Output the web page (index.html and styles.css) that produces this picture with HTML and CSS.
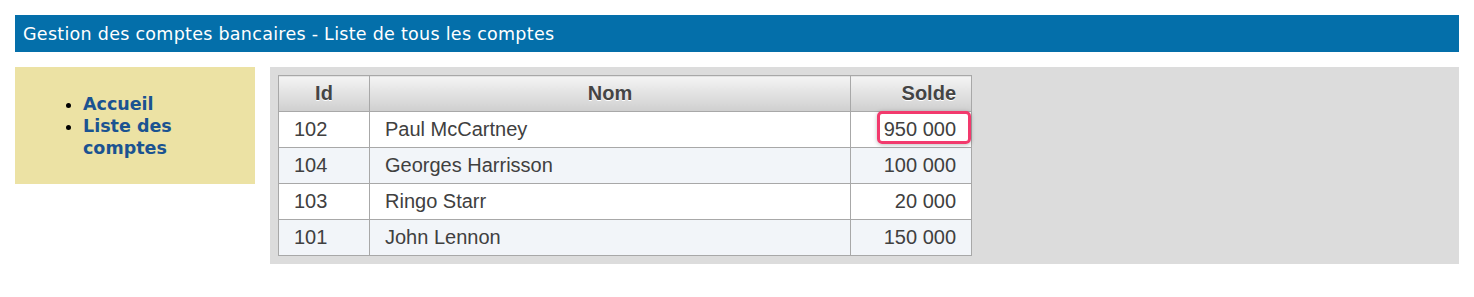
FILE: index.html
```html
<!DOCTYPE html>
<html lang="fr">
<head>
<meta charset="utf-8">
<title>Liste des comptes</title>
<link rel="stylesheet" href="styles.css">
</head>
<body>
<header class="topbar">Gestion des comptes bancaires - Liste de tous les comptes</header>
<div class="main">
  <nav class="sidebar">
    <ul class="menu">
      <li><a href="#">Accueil</a></li>
      <li><a href="#">Liste des comptes</a></li>
    </ul>
  </nav>
  <section class="content">
    <table class="grid">
      <colgroup>
        <col class="c-id"><col class="c-nom"><col class="c-solde">
      </colgroup>
      <thead>
        <tr><th class="center">Id</th><th class="center">Nom</th><th class="right">Solde</th></tr>
      </thead>
      <tbody>
        <tr><td>102</td><td>Paul McCartney</td><td class="right"><span class="mark">950 000</span></td></tr>
        <tr class="alt"><td>104</td><td>Georges Harrisson</td><td class="right">100 000</td></tr>
        <tr><td>103</td><td>Ringo Starr</td><td class="right">20 000</td></tr>
        <tr class="alt"><td>101</td><td>John Lennon</td><td class="right">150 000</td></tr>
      </tbody>
    </table>
  </section>
</div>
</body>
</html>
```
FILE: styles.css
```css
html, body {
  margin: 0;
  background: #ffffff;
}
body {
  padding: 15px;
  font-family: "DejaVu Sans", Verdana, sans-serif;
}
.topbar {
  background: #046faa;
  color: #ffffff;
  font-size: 17.5px;
  letter-spacing: 0.28px;
  height: 37px;
  line-height: 38px;
  padding-left: 8px;
  box-sizing: border-box;
}
.main {
  display: flex;
  align-items: flex-start;
  gap: 15px;
  margin-top: 15px;
}
.sidebar {
  width: 240px;
  flex: none;
  background: #ece2a4;
  padding: 10px 10px 9px 28px;
  box-sizing: border-box;
}
.menu {
  margin: 16px 0;
  padding-left: 40px;
  font-size: 17.5px;
  font-weight: bold;
  line-height: 22px;
}
.menu a {
  color: #1b5391;
  text-decoration: none;
}
.content {
  flex: 1;
  background: #dcdcdc;
  padding: 8px;
}
.grid {
  border-collapse: collapse;
  font-family: "Liberation Sans", Arial, sans-serif;
  font-size: 20px;
  color: #404040;
  border: 1px solid #a8a8a8;
}
.c-id { width: 91px; }
.c-nom { width: 481px; }
.c-solde { width: 121px; }
.grid th, .grid td {
  border: 1px solid #a8a8a8;
  height: 36px;
  padding: 0 15px;
  box-sizing: border-box;
  text-align: left;
}
.grid th {
  background: linear-gradient(#f4f4f4, #cfcfcf);
  color: #444444;
  font-weight: bold;
  text-shadow: 0 1px 0 #ffffff;
}
.grid td {
  background: #ffffff;
}
.grid tr.alt td {
  background: #f2f5f9;
}
.grid .center { text-align: center; }
.grid .right { text-align: right; }
.mark {
  position: relative;
}
.mark::after {
  content: "";
  position: absolute;
  left: -7px;
  right: -15px;
  top: -7px;
  bottom: -4px;
  border: 3px solid #f23a6d;
  border-radius: 5px;
  box-shadow: 0 1px 4px rgba(0,0,0,0.25);
}
```
